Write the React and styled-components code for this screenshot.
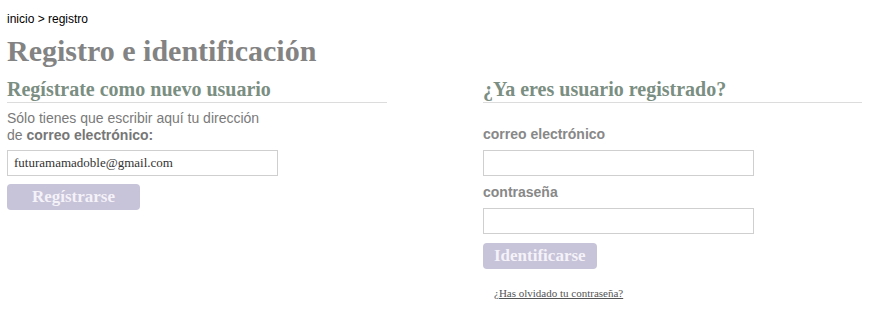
import React from "react";
import styled, { createGlobalStyle } from "styled-components";

const Global = createGlobalStyle`
	body {
		margin: 0;
		background: #fff;
		font-family: "Liberation Sans", Arial, sans-serif;
	}
`;

export default () => {
	return (
		<Page>
			<Global />
			<Crumbs>
				inicio &gt; registro
			</Crumbs>
			<Title>Registro e identificación</Title>
			<Columns>
				<Column>
					<Heading>Regístrate como nuevo usuario</Heading>
					<Intro>
						Sólo tienes que escribir aquí tu dirección
						<br />
						de <strong>correo electrónico:</strong>
					</Intro>
					<Field defaultValue="futuramamadoble@gmail.com" />
					<Button $width="133px">Regístrarse</Button>
				</Column>
				<Column>
					<Heading>¿Ya eres usuario registrado?</Heading>
					<Label>correo electrónico</Label>
					<Field />
					<Label>contraseña</Label>
					<Field type="password" />
					<Button $gap="9px">Identificarse</Button>
					<Forgot href="#">¿Has olvidado tu contraseña?</Forgot>
				</Column>
			</Columns>
		</Page>
	);
};

const Page = styled.div`
	padding: 12px 7px 0;
`;

const Crumbs = styled.div`
	font-size: 12px;
	line-height: 14px;
	color: #000;
`;

const Title = styled.h1`
	margin: 7px 0 0;
	font-family: "Liberation Serif", "Times New Roman", serif;
	font-size: 30px;
	line-height: 36px;
	font-weight: bold;
	color: #838383;
`;

const Columns = styled.div`
	display: grid;
	grid-template-columns: 380px 379px;
	column-gap: 96px;
	margin-top: 8px;
`;

const Column = styled.div`
	display: flex;
	flex-direction: column;
	align-items: flex-start;
`;

const Heading = styled.h2`
	align-self: stretch;
	margin: 0;
	padding-bottom: 1px;
	font-family: "Liberation Serif", "Times New Roman", serif;
	font-size: 20px;
	line-height: 24px;
	font-weight: bold;
	color: #7b8e82;
	border-bottom: 1px solid #dcdcdc;
`;

const Intro = styled.p`
	margin: 7px 0 0;
	font-size: 14px;
	line-height: 17px;
	color: #7a7a7a;
	strong {
		color: #777;
	}
`;

const Label = styled.div`
	margin-top: 23px;
	font-size: 14px;
	line-height: 17px;
	font-weight: bold;
	color: #888;
	& + input {
		margin-top: 7px;
	}
	input + & {
		margin-top: 8px;
	}
`;

const Field = styled.input`
	box-sizing: border-box;
	width: 271px;
	height: 26px;
	margin-top: 6px;
	padding: 0 6px;
	border: 1px solid #cfcfcf;
	border-radius: 0;
	font-family: "Liberation Serif", Georgia, serif;
	font-size: 13px;
	color: #333;
	outline: none;
`;

const Button = styled.button`
	margin-top: ${(p) => p.$gap || "8px"};
	width: ${(p) => p.$width || "auto"};
	height: 26px;
	padding: 0 11px;
	border: none;
	border-radius: 4px;
	background: #c7c3d8;
	color: #f4f2f8;
	font-family: "Liberation Serif", Georgia, serif;
	font-size: 17px;
	font-weight: bold;
	cursor: pointer;
`;

const Forgot = styled.a`
	margin: 18px 0 0 11px;
	font-family: "Liberation Serif", "Times New Roman", serif;
	font-size: 11px;
	color: #555;
	text-decoration: underline;
`;
